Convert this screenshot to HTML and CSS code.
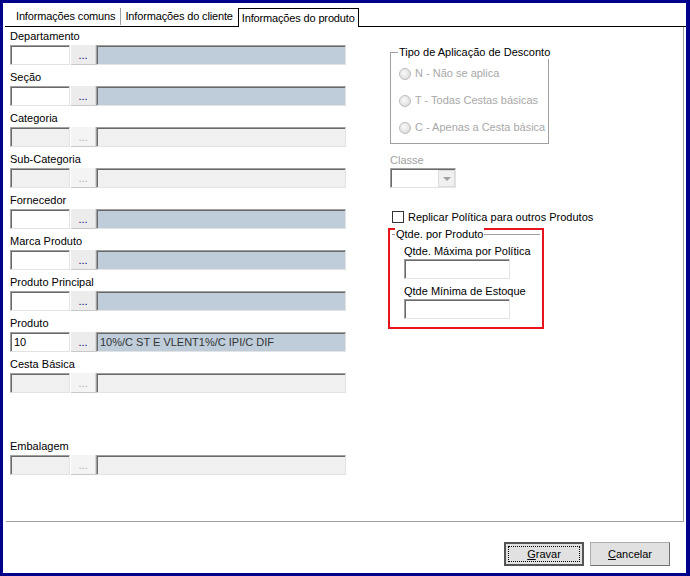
FILE: index.html
```html
<!DOCTYPE html>
<html lang="pt-BR">
<head>
    <meta charset="UTF-8">
    <title>Política de Desconto - Informações do produto</title>
    <link rel="stylesheet" href="styles.css">
</head>
<body>
    <div class="window">
        <div class="tabs">
            <div class="tab">Informações comuns</div>
            <div class="tab">Informações do cliente</div>
            <div class="tab active">Informações do produto</div>
        </div>

        <div class="panel">
            <!-- coluna esquerda: filtros de produto -->
            <div class="left-col">
                <div class="field">
                    <div class="lbl">Departamento</div>
                    <div class="lookup">
                        <div class="box code"></div><div class="dots">...</div><div class="box desc"></div>
                    </div>
                </div>
                <div class="field">
                    <div class="lbl">Seção</div>
                    <div class="lookup">
                        <div class="box code"></div><div class="dots">...</div><div class="box desc"></div>
                    </div>
                </div>
                <div class="field off">
                    <div class="lbl">Categoria</div>
                    <div class="lookup">
                        <div class="box code"></div><div class="dots">...</div><div class="box desc"></div>
                    </div>
                </div>
                <div class="field off">
                    <div class="lbl">Sub-Categoria</div>
                    <div class="lookup">
                        <div class="box code"></div><div class="dots">...</div><div class="box desc"></div>
                    </div>
                </div>
                <div class="field">
                    <div class="lbl">Fornecedor</div>
                    <div class="lookup">
                        <div class="box code"></div><div class="dots">...</div><div class="box desc"></div>
                    </div>
                </div>
                <div class="field">
                    <div class="lbl">Marca Produto</div>
                    <div class="lookup">
                        <div class="box code"></div><div class="dots">...</div><div class="box desc"></div>
                    </div>
                </div>
                <div class="field">
                    <div class="lbl">Produto Principal</div>
                    <div class="lookup">
                        <div class="box code"></div><div class="dots">...</div><div class="box desc"></div>
                    </div>
                </div>
                <div class="field">
                    <div class="lbl">Produto</div>
                    <div class="lookup">
                        <div class="box code">10</div><div class="dots">...</div><div class="box desc">10%/C ST E VLENT1%/C IPI/C DIF</div>
                    </div>
                </div>
                <div class="field off">
                    <div class="lbl">Cesta Básica</div>
                    <div class="lookup">
                        <div class="box code"></div><div class="dots">...</div><div class="box desc"></div>
                    </div>
                </div>
                <div class="spacer"></div>
                <div class="field off">
                    <div class="lbl">Embalagem</div>
                    <div class="lookup">
                        <div class="box code"></div><div class="dots">...</div><div class="box desc"></div>
                    </div>
                </div>
            </div>

            <!-- coluna direita -->
            <div class="right-col">
                <div class="group desconto">
                    <span class="group-title">Tipo de Aplicação de Desconto</span>
                    <div class="radio"><span class="circle"></span>N - Não se aplica</div>
                    <div class="radio"><span class="circle"></span>T - Todas Cestas básicas</div>
                    <div class="radio"><span class="circle"></span>C - Apenas a Cesta básica</div>
                </div>

                <div class="lbl-gray">Classe</div>
                <div class="combo">
                    <div class="combo-btn"><span class="arrow"></span></div>
                </div>

                <div class="check-row">
                    <span class="check"></span>Replicar Política para outros Produtos
                </div>

                <div class="highlight">
                    <div class="group qtde">
                        <span class="group-title">Qtde. por Produto</span>
                        <div class="qlbl">Qtde. Máxima por Política</div>
                        <div class="box qbox"></div>
                        <div class="qlbl">Qtde Mínima de Estoque</div>
                        <div class="box qbox"></div>
                    </div>
                </div>
            </div>
        </div>

        <div class="footer">
            <button class="btn default"><span class="focus"><u>G</u>ravar</span></button>
            <button class="btn"><u>C</u>ancelar</button>
        </div>
    </div>
</body>
</html>
```

FILE: styles.css
```css
/* Janela estilo Windows classico */
* {
    box-sizing: border-box;
}

body {
    margin: 0;
    font-family: "Liberation Sans", Arial, sans-serif;
    font-size: 11px;
    color: #000;
    background: #fff;
}

.window {
    width: 690px;
    height: 576px;
    border: 3px solid #00008b;
    border-right-width: 4px;
    background: #fff;
    display: flex;
    flex-direction: column;
}

/* Abas */
.tabs {
    height: 24px;
    margin-left: 2px;
    padding-left: 6px;
    display: flex;
    align-items: flex-end;
    border-bottom: 1px solid #000;
}

.tab {
    height: 17px;
    line-height: 17px;
    padding: 0 5px 0 4px;
    margin-bottom: 1px;
    white-space: nowrap;
    letter-spacing: -0.15px;
}

.tab:first-child {
    padding-left: 5px;
    border-right: 1px solid #a0a0a0;
}

.tab.active {
    height: 19px;
    line-height: 19px;
    margin-bottom: -1px;
    padding: 0 3px;
    border: 1px solid #000;
    border-bottom: none;
    background: #fff;
}

/* Painel principal */
.panel {
    height: 495px;
    margin: 0 2px 0 3px;
    border-right: 1px solid #a0a0a0;
    border-bottom: 1px solid #a0a0a0;
    display: flex;
}

.left-col {
    width: 340px;
    padding-left: 4px;
    margin-top: -3px;
}

.field {
    height: 41px;
}

.lbl {
    height: 21px;
    padding-top: 5px;
    line-height: 14px;
}

.spacer {
    height: 41px;
}

.lookup {
    display: flex;
    height: 20px;
}

.box {
    height: 20px;
    border: 1px solid;
    border-color: #a0a0a0 #e3e3e3 #e3e3e3 #a0a0a0;
    box-shadow: inset 1px 1px 0 #696969;
    background: #fff;
    line-height: 18px;
    padding-left: 3px;
    white-space: nowrap;
}

.code {
    width: 60px;
}

.dots {
    width: 25px;
    height: 20px;
    margin-left: 1px;
    background: #ececec;
    border-bottom: 1px solid #c8c8c8;
    border-right: 1px solid #d8d8d8;
    text-align: center;
    line-height: 20px;
    color: #000060;
}

.desc {
    width: 250px;
    background: #bfcddb;
    color: #333;
}

.field.off .box {
    background: #f0f0f0;
}

.field.off .dots {
    color: #a8a8a8;
    background: #f4f4f4;
}

/* Coluna direita */
.right-col {
    margin-left: 44px;
    width: 200px;
}

.group {
    position: relative;
    border: 1px solid #a0a0a0;
}

.group-title {
    position: absolute;
    top: -8px;
    left: 7px;
    padding: 0 1px;
    background: #fff;
    line-height: 14px;
    white-space: nowrap;
}

.desconto {
    width: 159px;
    height: 92px;
    margin-top: 25px;
    padding-top: 7px;
}

.radio {
    height: 27px;
    line-height: 27px;
    padding-left: 8px;
    color: #a8a8a8;
    display: flex;
    align-items: center;
    white-space: nowrap;
}

.circle {
    width: 12px;
    height: 12px;
    flex-shrink: 0;
    border-radius: 50%;
    border: 1px solid #bcbcbc;
    background: radial-gradient(circle at 40% 40%, #fafafa, #d4d4d4);
    margin-right: 4px;
}

.lbl-gray {
    margin-top: 9px;
    height: 15px;
    line-height: 14px;
    color: #a0a0a0;
}

.combo {
    width: 66px;
    height: 20px;
    border: 1px solid;
    border-color: #a0a0a0 #e3e3e3 #e3e3e3 #a0a0a0;
    box-shadow: inset 1px 1px 0 #696969;
    display: flex;
    justify-content: flex-end;
    padding: 1px 0 0;
}

.combo-btn {
    width: 17px;
    height: 17px;
    background: #f0f0f0;
    border: 1px solid #dcdcdc;
    display: flex;
    align-items: center;
    justify-content: center;
}

.arrow {
    width: 0;
    height: 0;
    border-left: 4px solid transparent;
    border-right: 4px solid transparent;
    border-top: 4px solid #a0a0a0;
}

.check-row {
    margin-top: 22px;
    height: 14px;
    line-height: 14px;
    display: flex;
    align-items: center;
    white-space: nowrap;
}

.check {
    width: 12px;
    height: 12px;
    flex-shrink: 0;
    border: 1px solid #333;
    background: #fff;
    margin: 0 4px 0 2px;
}

.highlight {
    margin: 4px 0 0 -2px;
    width: 156px;
    height: 101px;
    border: 2px solid #e8141c;
}

.qtde {
    margin: 4px 2px 0;
    border: none;
    border-top: 1px solid #a0a0a0;
    padding-left: 12px;
    padding-top: 9px;
}

.qtde .group-title {
    left: 3px;
}

.qlbl {
    height: 14px;
    line-height: 14px;
    white-space: nowrap;
}

.qbox {
    width: 106px;
    margin-top: 1px;
    margin-bottom: 5px;
}

/* Rodapé com botões */
.footer {
    flex: 1;
    display: flex;
    justify-content: flex-end;
    gap: 6px;
    padding: 20px 16px 0 0;
}

.btn {
    width: 80px;
    height: 24px;
    font-family: "Liberation Sans", Arial, sans-serif;
    font-size: 11px;
    color: #000;
    background: #e1e1e1;
    border: 1px solid #adadad;
    border-right-color: #707070;
    border-bottom-color: #707070;
    padding: 0;
}

.btn.default {
    border: 2px solid #555;
    padding: 2px;
}

.focus {
    display: block;
    height: 100%;
    border: 1px dotted #000;
    line-height: 14px;
}
```
